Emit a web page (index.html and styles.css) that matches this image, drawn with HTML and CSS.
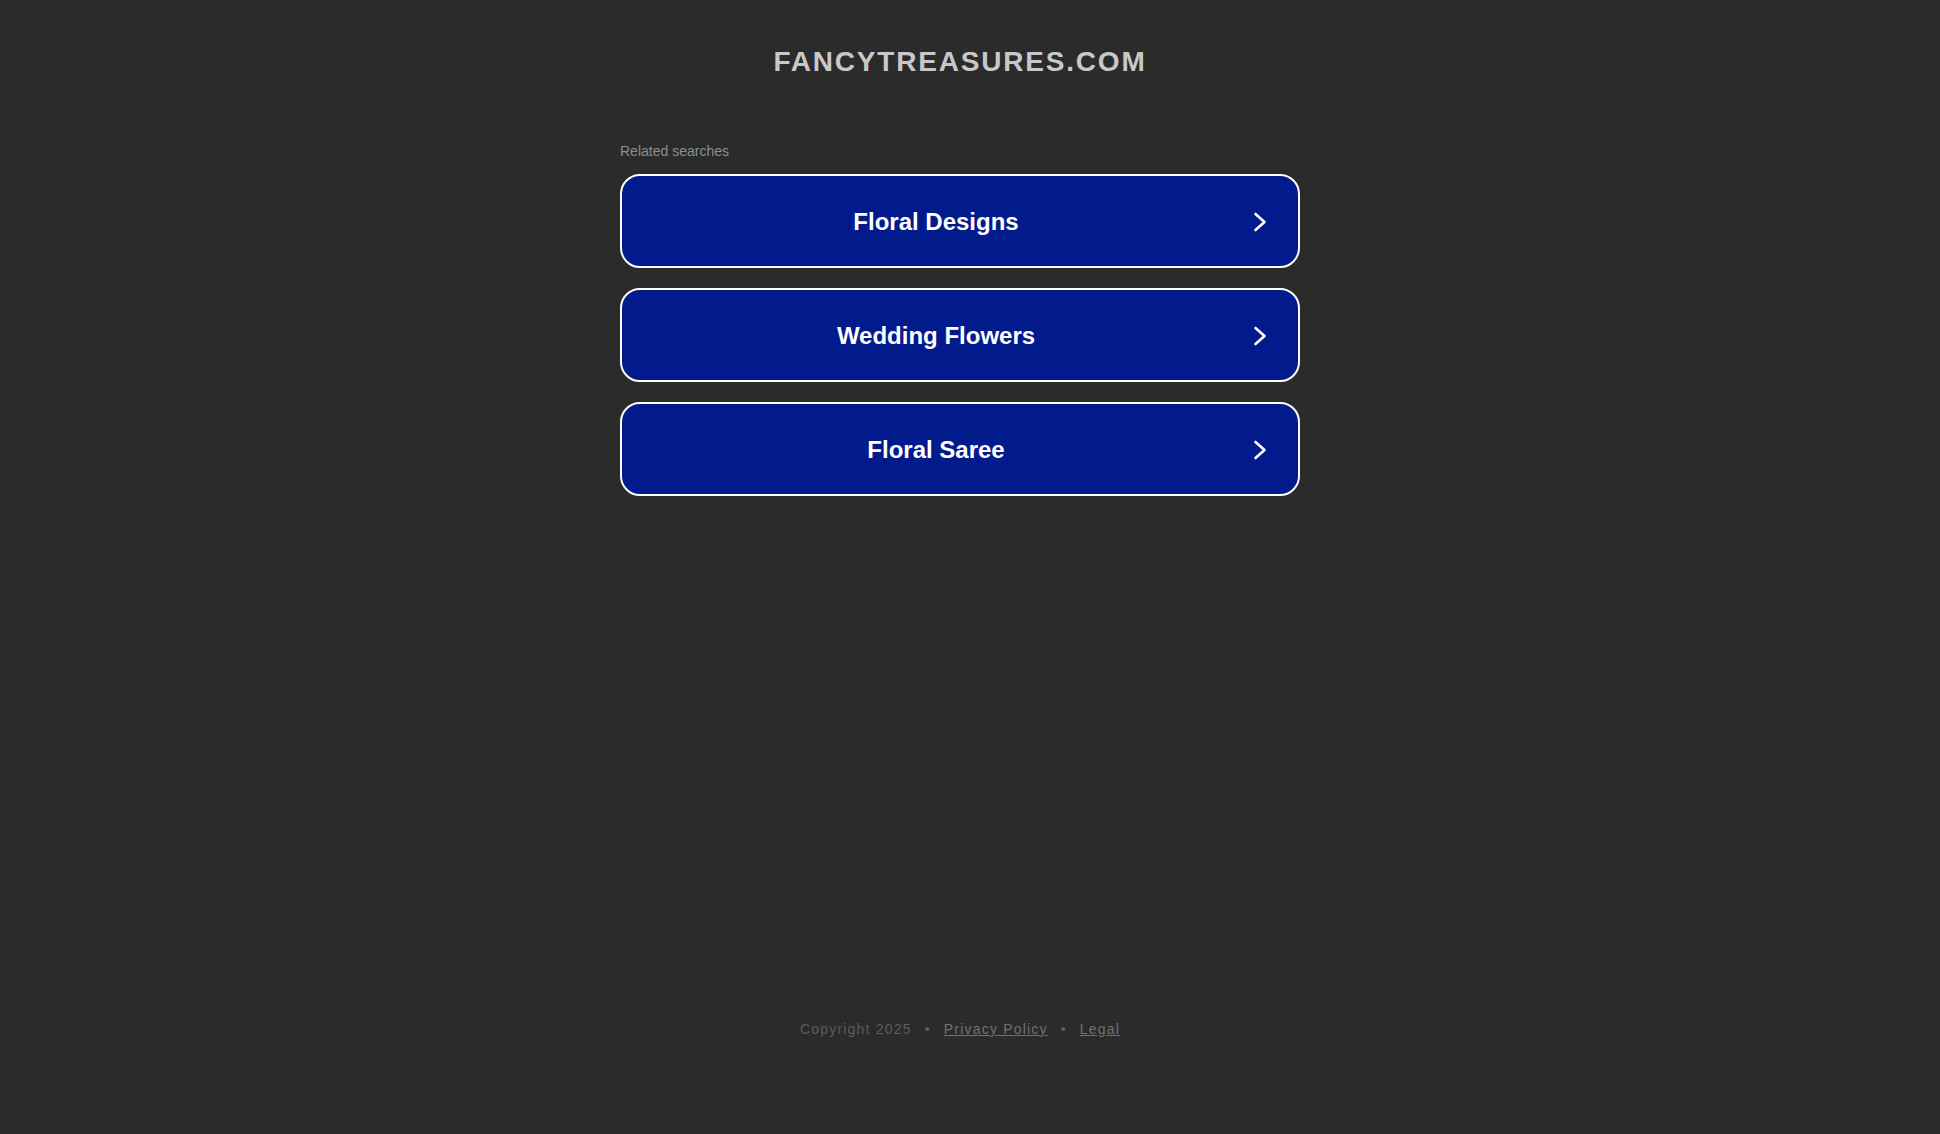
FILE: index.html
```html
<!DOCTYPE html>
<html lang="en">
<head>
<meta charset="utf-8">
<title>fancytreasures.com</title>
<link rel="stylesheet" href="styles.css">
</head>
<body>
<div class="page">
  <header class="header">
    <h1 class="domain">FANCYTREASURES.COM</h1>
  </header>
  <main class="content">
    <div class="related">Related searches</div>
    <a class="btn" href="#">
      <span class="btn-label">Floral Designs</span>
      <span class="btn-arrow"><svg width="20" height="20" viewBox="0 0 20 20"><path d="M5.5 2 L14.5 10 L5.5 18" fill="none" stroke="#fff" stroke-width="2.6" stroke-linecap="round" stroke-linejoin="round"/></svg></span>
    </a>
    <a class="btn" href="#">
      <span class="btn-label">Wedding Flowers</span>
      <span class="btn-arrow"><svg width="20" height="20" viewBox="0 0 20 20"><path d="M5.5 2 L14.5 10 L5.5 18" fill="none" stroke="#fff" stroke-width="2.6" stroke-linecap="round" stroke-linejoin="round"/></svg></span>
    </a>
    <a class="btn" href="#">
      <span class="btn-label">Floral Saree</span>
      <span class="btn-arrow"><svg width="20" height="20" viewBox="0 0 20 20"><path d="M5.5 2 L14.5 10 L5.5 18" fill="none" stroke="#fff" stroke-width="2.6" stroke-linecap="round" stroke-linejoin="round"/></svg></span>
    </a>
  </main>
  <footer class="footer">
    <span>Copyright 2025</span><span class="sep">•</span><a href="#">Privacy Policy</a><span class="sep">•</span><a href="#">Legal</a>
  </footer>
</div>
</body>
</html>
```

FILE: styles.css
```css
html, body {
  margin: 0;
  padding: 0;
  background: #2b2b2b;
  font-family: "Liberation Sans", Arial, sans-serif;
}

.page {
  width: 1920px;
  display: flex;
  flex-direction: column;
  align-items: center;
}

.header {
  padding-top: 47px;
}

.domain {
  margin: 0;
  font-size: 28px;
  line-height: 30px;
  font-weight: bold;
  letter-spacing: 1.8px;
  color: #c8c8c8;
  text-align: center;
}

.content {
  width: 680px;
  margin-top: 66px;
  display: flex;
  flex-direction: column;
  gap: 20px;
}

.related {
  font-size: 14px;
  line-height: 16px;
  color: #8e8e8e;
  margin-bottom: -5px;
}

.btn {
  box-sizing: border-box;
  height: 94px;
  display: flex;
  align-items: center;
  padding-top: 2px;
  padding-right: 28px;
  background: #011a8c;
  border: 2px solid #ffffff;
  border-radius: 20px;
  text-decoration: none;
}

.btn-label {
  flex: 1;
  text-align: center;
  color: #ffffff;
  font-size: 24px;
  font-weight: bold;
  line-height: 28px;
}

.btn-arrow {
  width: 20px;
  height: 20px;
  display: flex;
}

.footer {
  margin-top: 525px;
  font-size: 14px;
  line-height: 16px;
  letter-spacing: 1.2px;
  color: #5c5c5c;
}

.footer a {
  color: #717171;
  text-decoration: underline;
}

.sep {
  margin: 0 13px;
}
```
